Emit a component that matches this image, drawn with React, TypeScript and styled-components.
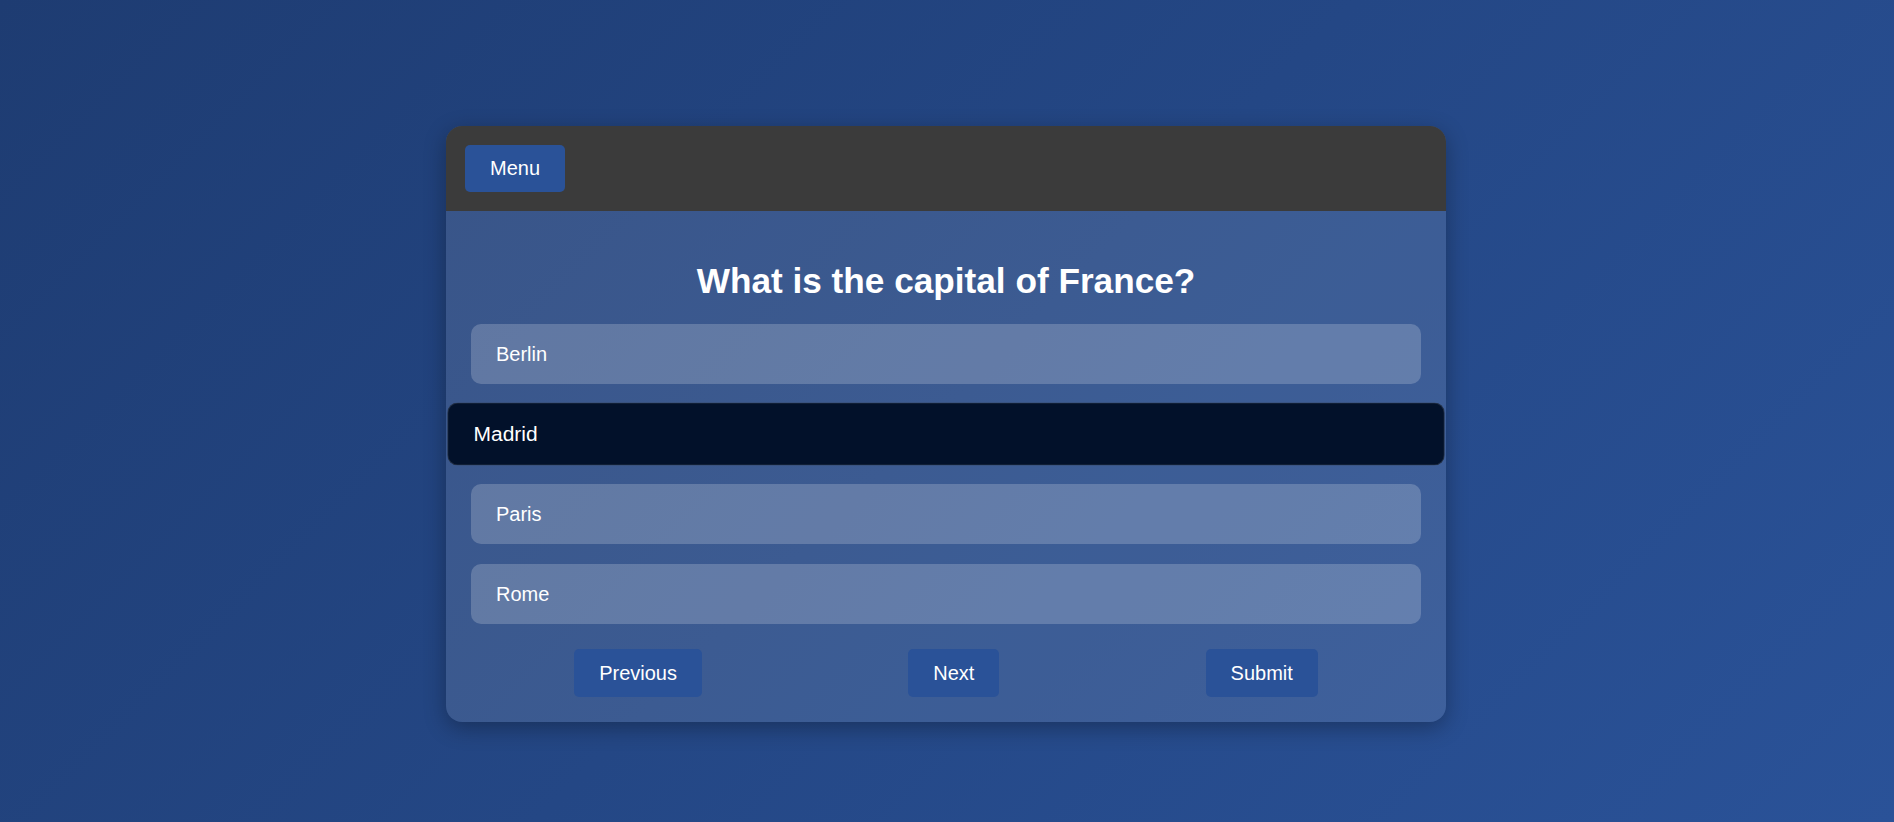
import React, { useState } from "react";
import styled, { createGlobalStyle } from "styled-components";

const GlobalStyle = createGlobalStyle`
  html, body {
    margin: 0;
    padding: 0;
    height: 100%;
  }
  body {
    font-family: "Liberation Sans", Arial, sans-serif;
    background: linear-gradient(135deg, #1e3c72 0%, #2a5298 100%);
    min-height: 822px;
    color: #ffffff;
  }
`;

const Page = styled.div`
  display: flex;
  justify-content: center;
  align-items: flex-start;
  padding: 126px 2px 0 0;
  box-sizing: border-box;
  min-height: 822px;
`;

const Card = styled.div`
  width: 1000px;
  background: rgba(255, 255, 255, 0.11);
  border-radius: 16px;
  box-shadow: 0 6px 22px rgba(0, 0, 0, 0.3);
  overflow: hidden;
`;

const Header = styled.div`
  display: flex;
  align-items: center;
  background: #3b3b3b;
  padding: 19px;
`;

const Button = styled.button`
  font-family: "Liberation Sans", Arial, sans-serif;
  font-size: 20px;
  line-height: 24px;
  color: #ffffff;
  background: #2a5298;
  border: none;
  border-radius: 5px;
  padding: 12px 25px;
  cursor: pointer;
`;

const MenuButton = styled(Button)`
  line-height: 23px;
`;

const Body = styled.div`
  padding: 25px;
  display: flex;
  flex-direction: column;
`;

const Title = styled.h2`
  margin: 25px 0 23px;
  font-size: 35.2px;
  font-weight: 700;
  text-align: center;
  color: #ffffff;
`;

const Options = styled.div`
  display: flex;
  flex-direction: column;
  gap: 20px;
`;

const Option = styled.div<{ $selected: boolean }>`
  font-size: 20px;
  line-height: 24px;
  padding: 17px 24px;
  border-radius: 10px;
  border: 1px solid ${(p) => (p.$selected ? "rgba(255,255,255,0.12)" : "transparent")};
  background: ${(p) => (p.$selected ? "#02112a" : "rgba(255, 255, 255, 0.2)")};
  color: #ffffff;
  transform: ${(p) => (p.$selected ? "scale(1.05)" : "none")};
  cursor: pointer;
`;

const Nav = styled.div`
  display: flex;
  justify-content: space-around;
  margin-top: 25px;
`;

const answers = ["Berlin", "Madrid", "Paris", "Rome"];

export default function App() {
  const [selected, setSelected] = useState(1);
  return (
    <>
      <GlobalStyle />
      <Page>
        <Card>
          <Header>
            <MenuButton>Menu</MenuButton>
          </Header>
          <Body>
            <Title>What is the capital of France?</Title>
            <Options>
              {answers.map((a, i) => (
                <Option key={a} $selected={i === selected} onClick={() => setSelected(i)}>
                  {a}
                </Option>
              ))}
            </Options>
            <Nav>
              <Button>Previous</Button>
              <Button>Next</Button>
              <Button>Submit</Button>
            </Nav>
          </Body>
        </Card>
      </Page>
    </>
  );
}
